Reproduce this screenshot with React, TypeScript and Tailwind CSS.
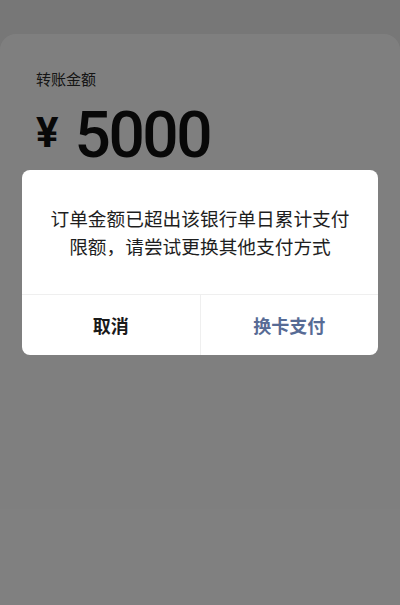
import type { ReactElement } from "react";

const cjk = { fontFamily: '"Noto Sans CJK SC", "Noto Sans", sans-serif' };
const num = { fontFamily: 'Roboto, "Noto Sans CJK SC", sans-serif' };

function TransferCard(): ReactElement {
  return (
    <div className="mt-[34px] min-h-[571px] rounded-t-[16px] bg-white px-[36px] pt-[34px]">
      <div className="text-[15px] leading-[22px] text-[#2a2a2a]" style={cjk}>
        转账金额
      </div>
      <div className="mt-[14px] flex items-center text-[#111]" style={num}>
        <span className="mb-[6px] text-[42px] font-bold leading-none">¥</span>
        <span className="ml-[16px] text-[64px] font-medium leading-none tracking-[-2.5px]">5000</span>
      </div>
    </div>
  );
}

function LimitDialog(): ReactElement {
  return (
    <div className="absolute left-[22px] top-[170px] w-[356px] overflow-hidden rounded-[8px] bg-white" style={cjk}>
      <div className="flex h-[124px] items-center justify-center px-[24px] text-center text-[18.7px] leading-[28px] text-[#1e1e1e]">
        <p>
          订单金额已超出该银行单日累计支付
          <br />
          限额，请尝试更换其他支付方式
        </p>
      </div>
      <div className="flex h-[61px] border-t border-[#efefef]">
        <button className="flex-1 text-[18px] font-bold text-[#1a1a1a]">取消</button>
        <button className="flex-1 border-l border-[#efefef] text-[18px] font-bold text-[#576b95]">换卡支付</button>
      </div>
    </div>
  );
}

export default function App(): ReactElement {
  return (
    <div className="relative h-[605px] w-[400px] overflow-hidden bg-[#eeeeee]">
      <TransferCard />
      {/* dim mask over the page */}
      <div className="absolute inset-0 bg-black/50" />
      <LimitDialog />
    </div>
  );
}
